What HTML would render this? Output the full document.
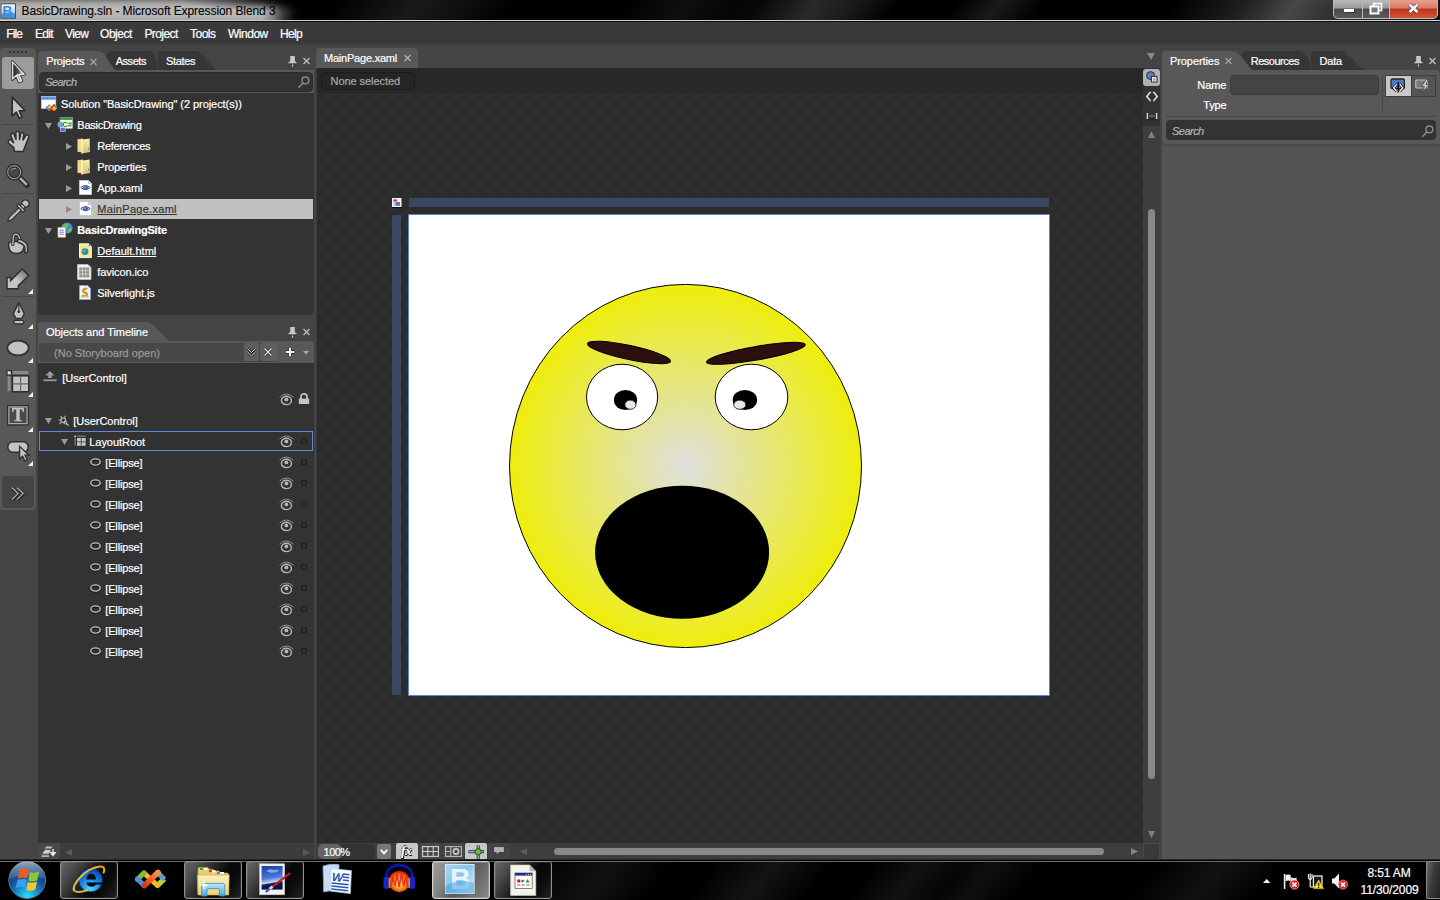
<!DOCTYPE html>
<html><head><meta charset="utf-8"><title>BasicDrawing.sln - Microsoft Expression Blend 3</title>
<style>
*{box-sizing:border-box;margin:0;padding:0}
html,body{width:1440px;height:900px;overflow:hidden;background:#444;font-family:"Liberation Sans",sans-serif;font-size:11px;color:#fff}
.a{position:absolute}
.t{position:absolute;white-space:nowrap;line-height:14px;height:14px;-webkit-text-stroke:0.2px currentColor}
svg{position:absolute;overflow:visible}
</style></head><body>
<!-- title bar -->
<div class="a" style="left:0px;top:0px;width:1440px;height:22px;background:#000;"></div>
<div class="a" style="left:0;top:0;width:1440px;height:20px;overflow:hidden"><div class="a" style="left:-20px;top:0;width:1480px;height:20px;transform:skewX(-35deg);background:linear-gradient(90deg,rgba(255,255,255,0) 0px,rgba(255,255,255,0) 350px,rgba(255,255,255,0.1) 430px,rgba(255,255,255,0.06) 480px,rgba(255,255,255,0) 530px,rgba(255,255,255,0) 640px,rgba(255,255,255,0.06) 700px,rgba(255,255,255,0.02) 750px,rgba(255,255,255,0.03) 775px,rgba(255,255,255,0.16) 830px,rgba(255,255,255,0.1) 870px,rgba(255,255,255,0) 915px,rgba(255,255,255,0) 970px,rgba(255,255,255,0.1) 1015px,rgba(255,255,255,0) 1060px,rgba(255,255,255,0) 1190px,rgba(255,255,255,0.12) 1260px,rgba(255,255,255,0.28) 1310px,rgba(255,255,255,0.2) 1350px,rgba(255,255,255,0.05) 1480px)"></div></div>
<div class="a" style="left:0px;top:0px;width:300px;height:20px;background:linear-gradient(180deg,#787878 0,#8e8e8e 8%,#a6a6a6 20%,#b6b6b6 35%,#bababa 55%,#b4b4b4 80%,#a8a8a8 100%);"></div>
<div class="a" style="left:180px;top:0px;width:122px;height:12px;background:radial-gradient(ellipse 100% 100% at 100% 0,rgba(0,0,0,.95) 0,rgba(0,0,0,.8) 30%,rgba(0,0,0,.35) 65%,rgba(0,0,0,0) 100%);"></div>
<div class="a" style="left:262px;top:0px;width:40px;height:20px;background:linear-gradient(90deg,rgba(0,0,0,0) 0,rgba(0,0,0,.25) 25%,rgba(0,0,0,.7) 55%,rgba(0,0,0,.95) 80%,#000 100%);"></div>
<div class="a" style="left:0px;top:20px;width:1440px;height:1px;background:#d0d0d0;"></div>
<div class="a" style="left:0px;top:21px;width:1440px;height:1px;background:#0c0c0c;"></div>
<span class="t" style="left:21.5px;top:3.84px;font-size:12px;color:#000;letter-spacing:-0.087px;-webkit-text-stroke:0.1px #000;">BasicDrawing.sln - Microsoft Expression Blend 3</span>
<svg style="left:0px;top:3px" width="17" height="16" viewBox="0 3 17 16"><defs><linearGradient id="ai" x1="0" y1="0" x2="0" y2="1"><stop offset="0" stop-color="#f4fbff"/><stop offset="0.6" stop-color="#b8dcf4"/><stop offset="1" stop-color="#6ab4ea"/></linearGradient></defs><rect x="1" y="3.8" width="14.4" height="14.4" fill="url(#ai)" stroke="#3a3a3a" stroke-width="0.9"/><path d="M1.5 14 Q8 11 15 13.4 V17.8 H1.5 Z" fill="#2a84d8" opacity="0.75"/><text x="2.6" y="16.2" font-family="Liberation Sans, sans-serif" font-weight="bold" font-size="14" fill="#3a8cdc" style="will-change:transform">B</text></svg>
<div class="a" style="left:1333px;top:0px;width:105px;height:19px;background:#bbb;border-radius:0 0 5px 5px;"></div>
<div class="a" style="left:1334px;top:0px;width:28px;height:18px;background:linear-gradient(#b9b9b9 0,#999 45%,#4a4a4a 50%,#5a5a5a 100%);border-radius:0 0 0 4px;"></div>
<div class="a" style="left:1363px;top:0px;width:26px;height:18px;background:linear-gradient(#b9b9b9 0,#999 45%,#4a4a4a 50%,#5a5a5a 100%);"></div>
<div class="a" style="left:1390px;top:0px;width:47px;height:18px;background:linear-gradient(#e8a090 0,#d87a68 45%,#c0341a 50%,#d0573a 100%);border-radius:0 0 4px 0;"></div>
<div class="a" style="left:1344px;top:9px;width:10px;height:3px;background:#fff;box-shadow:0 0 1px 0.5px #333;"></div>
<svg style="left:1369px;top:2px" width="14" height="13" viewBox="0 0 14 13"><rect x="4.5" y="1.5" width="8" height="7" fill="none" stroke="#fff" stroke-width="1.6"/><rect x="1.5" y="4.5" width="8" height="7" fill="#777" stroke="#fff" stroke-width="2"/></svg>
<svg style="left:1408px;top:2.5px" width="11" height="11" viewBox="0 0 11 11"><path d="M1.6 1.6 L9.4 9 M9.4 1.6 L1.6 9" stroke="#444" stroke-width="4" stroke-linecap="butt"/><path d="M1.6 1.6 L9.4 9 M9.4 1.6 L1.6 9" stroke="#fff" stroke-width="2.6" stroke-linecap="butt"/></svg>
<div class="a" style="left:0px;top:22px;width:1440px;height:22px;background:#3a3a3a;"></div>
<div class="a" style="left:0px;top:44px;width:1440px;height:1px;background:#404040;"></div>
<span class="t" style="left:6.2px;top:26.84px;font-size:12px;color:#fff;letter-spacing:-0.834px;">File</span>
<span class="t" style="left:35px;top:26.84px;font-size:12px;color:#fff;letter-spacing:-0.669px;">Edit</span>
<span class="t" style="left:65px;top:26.84px;font-size:12px;color:#fff;letter-spacing:-0.648px;">View</span>
<span class="t" style="left:100px;top:26.84px;font-size:12px;color:#fff;letter-spacing:-0.447px;">Object</span>
<span class="t" style="left:144.4px;top:26.84px;font-size:12px;color:#fff;letter-spacing:-0.564px;">Project</span>
<span class="t" style="left:190px;top:26.84px;font-size:12px;color:#fff;letter-spacing:-0.503px;">Tools</span>
<span class="t" style="left:228px;top:26.84px;font-size:12px;color:#fff;letter-spacing:-0.480px;">Window</span>
<span class="t" style="left:280px;top:26.84px;font-size:12px;color:#fff;letter-spacing:-0.670px;">Help</span>
<!-- toolbar -->
<div class="a" style="left:0px;top:48px;width:36px;height:462px;background:#585858;border-radius:3px 4px 4px 3px;"></div>
<div class="a" style="left:9px;top:51px;width:2px;height:2px;background:#343434;"></div>
<div class="a" style="left:13px;top:51px;width:2px;height:2px;background:#343434;"></div>
<div class="a" style="left:17px;top:51px;width:2px;height:2px;background:#343434;"></div>
<div class="a" style="left:21px;top:51px;width:2px;height:2px;background:#343434;"></div>
<div class="a" style="left:25px;top:51px;width:2px;height:2px;background:#343434;"></div>
<div class="a" style="left:2px;top:57px;width:32px;height:32px;background:#9c9c9c;border-radius:3px;"></div>
<svg style="left:11.4px;top:60.4px" width="16" height="24" viewBox="0 0 16 24"><defs><linearGradient id="sa" x1="0" y1="0" x2="1" y2="0"><stop offset="0.1" stop-color="#2c2c2c"/><stop offset="0.55" stop-color="#555"/><stop offset="1" stop-color="#c8c8c8"/></linearGradient></defs><path d="M1.2 1.2 L1.2 19.8 L5.3 16.2 L8.1 22.2 L11.1 20.8 L8.3 14.9 L14 14.5 Z" fill="#f4f4f4" stroke="#2a2a2a" stroke-width="2.2" stroke-linejoin="round"/><path d="M1.2 1.2 L1.2 19.8 L5.3 16.2 L8.1 22.2 L11.1 20.8 L8.3 14.9 L14 14.5 Z" fill="#f4f4f4" stroke="#f4f4f4" stroke-width="0.5"/><path d="M2.3 3.6 L2.3 17.4 L5.4 14.6 L11.6 13.6 Z" fill="url(#sa)"/><path d="M6.4 16 L8.6 20.6 L9.4 20.2 L7.2 15.6 Z" fill="#888"/></svg>
<svg style="left:11.4px;top:95.6px" width="16" height="24" viewBox="0 0 16 24"><path d="M1.2 1.2 L1.2 19.8 L5.3 16.2 L8.1 22.2 L11.1 20.8 L8.3 14.9 L14 14.5 Z" fill="#c2c2c2" stroke="#2e2e2e" stroke-width="1.7" stroke-linejoin="round"/></svg>
<div class="a" style="left:2px;top:124px;width:32px;height:1px;background:#464646;"></div>
<div class="a" style="left:2px;top:193px;width:32px;height:1px;background:#464646;"></div>
<div class="a" style="left:2px;top:296px;width:32px;height:1px;background:#464646;"></div>
<svg style="left:0px;top:126px" width="36" height="30" viewBox="0 0 36 30"><path d="M14.6 25.6 L13.6 21.4 L8.6 17.2 Q7.6 15.2 9.2 13.8 Q10.4 13.2 11.4 14.2 L13.6 16.8 L10.8 9.6 Q10.6 7.4 12.4 7.2 Q13.6 7.2 14.2 8.6 L16 13.6 L15.8 7 Q16 5.2 17.6 5.2 Q19.2 5.2 19.4 7 L19.6 13.4 L20.6 8 Q21 6.2 22.6 6.6 Q24 7 23.8 8.8 L23 14 L25.6 9.8 Q26.6 8.2 28 9 Q29.2 9.8 28.6 11.6 L25.2 20 L23.2 25.6 Z" fill="#c2c2c2" stroke="#2e2e2e" stroke-width="1.5" stroke-linejoin="round"/></svg>
<svg style="left:6.3px;top:164.2px" width="24" height="23" viewBox="0 0 24 23"><path d="M13.5 13.5 L21 21" stroke="#2e2e2e" stroke-width="5.6" stroke-linecap="round"/><path d="M14 14 L20.8 20.8" stroke="#b4b4b4" stroke-width="2.4" stroke-linecap="butt"/><circle cx="8.2" cy="8.2" r="6.6" fill="#474747" stroke="#2e2e2e" stroke-width="3.6"/><circle cx="8.2" cy="8.2" r="6.5" fill="none" stroke="#b0b0b0" stroke-width="1"/><path d="M4.6 6.4 Q6.6 3.8 10 4.4" stroke="#aaa" stroke-width="0.9" fill="none"/></svg>
<svg style="left:-0.8px;top:197px" width="36" height="30" viewBox="0 0 36 30"><g transform="rotate(45 18 15)"><circle cx="18" cy="3.2" r="3.7" fill="#c2c2c2" stroke="#2e2e2e" stroke-width="1.4"/><rect x="15.6" y="5.6" width="4.8" height="3" fill="#c2c2c2" stroke="#2e2e2e" stroke-width="1.1"/><rect x="13.4" y="8.2" width="9.2" height="2.6" fill="#c2c2c2" stroke="#2e2e2e" stroke-width="1.1"/><path d="M16.2 10.8 L19.8 10.8 L19.8 24 L18 28.4 L16.2 24 Z" fill="#c2c2c2" stroke="#2e2e2e" stroke-width="1.2" stroke-linejoin="round"/><path d="M16.6 14 H18.2 M16.6 16.4 H18.2 M16.6 18.8 H18.2 M16.6 21.2 H18.2" stroke="#777" stroke-width="0.7"/></g></svg>
<svg style="left:0px;top:230px" width="36" height="26" viewBox="0 0 36 26"><path d="M8.8 12.4 Q8 16.4 9.6 19.8 Q11 23.4 16.2 23.4 Q21.6 23.4 23 20 Q24.6 16.6 24.2 13.6 Q20 9.4 8.8 12.4 Z" fill="#c2c2c2" stroke="#2e2e2e" stroke-width="1.5" stroke-linejoin="round"/><path d="M18.4 8.6 Q23.4 10.4 26.4 13.2 Q27.8 14.8 27.6 22.4 L25 22.8 Q25.2 16.6 24 15.4 Q21.6 13.4 17.4 12 Z" fill="#c2c2c2" stroke="#2e2e2e" stroke-width="1.4" stroke-linejoin="round"/><path d="M12.8 14.4 L13.3 7.2 Q13.8 4.2 16 4.2 Q18.4 4.4 19.6 8.4" fill="none" stroke="#2e2e2e" stroke-width="3.4" stroke-linecap="round"/><path d="M12.8 14.4 L13.3 7.2 Q13.8 4.2 16 4.2 Q18.4 4.4 19.6 8.4" fill="none" stroke="#c2c2c2" stroke-width="1.3" stroke-linecap="round"/></svg>
<svg style="left:6px;top:268px" width="24" height="22" viewBox="0 0 24 22"><defs><linearGradient id="ga" x1="1" y1="0" x2="0" y2="1"><stop offset="0" stop-color="#5e5e5e"/><stop offset="0.55" stop-color="#c4c4c4"/><stop offset="1" stop-color="#c4c4c4"/></linearGradient></defs><path d="M16.2 1 L22.8 7.6 L12.4 17.6 L12.4 20.8 L1 20.8 L1 9.6 L4.6 9.6 L4.6 12.6 Z" fill="url(#ga)" stroke="#2e2e2e" stroke-width="1.5" stroke-linejoin="miter"/></svg>
<svg style="left:11.6px;top:301.6px" width="13" height="23" viewBox="0 0 13 23"><g transform="scale(1.08 1.02)"><path d="M6.3 0.8 L11.4 11.6 L8.8 16.2 L3.8 16.2 L1.2 11.6 Z" fill="#c2c2c2" stroke="#2e2e2e" stroke-width="1.3" stroke-linejoin="round"/><path d="M6.3 1.4 L6.3 9" stroke="#2e2e2e" stroke-width="1"/><circle cx="6.3" cy="9.6" r="1.3" fill="#2e2e2e"/><rect x="1.6" y="18" width="9.4" height="3.4" rx="1.7" fill="#c2c2c2" stroke="#2e2e2e" stroke-width="1.2"/></g></svg>
<svg style="left:6px;top:339px" width="24" height="18" viewBox="0 0 24 18"><ellipse cx="12" cy="9" rx="10.6" ry="7.4" fill="#c2c2c2" stroke="#2e2e2e" stroke-width="1.6"/></svg>
<svg style="left:6px;top:370px" width="24" height="24" viewBox="0 0 24 24"><rect x="1" y="0.6" width="4.4" height="4.4" fill="#e0e0e0" stroke="#2e2e2e" stroke-width="1.2"/><rect x="6.8" y="1" width="15.6" height="3" fill="#8a8a8a"/><rect x="1.6" y="6.4" width="3" height="14.6" fill="#8a8a8a"/><rect x="6.4" y="5.8" width="16.4" height="16" fill="#c2c2c2" stroke="#2e2e2e" stroke-width="1.6"/><path d="M14.6 6 L14.6 21.6 M6.6 13.8 L22.6 13.8" stroke="#666" stroke-width="1.2"/></svg>
<svg style="left:7px;top:405px" width="22" height="21" viewBox="0 0 22 21"><rect x="0.8" y="0.8" width="20.4" height="19" fill="#4a4a4a" stroke="#2e2e2e" stroke-width="1.6"/><rect x="1.9" y="1.9" width="18.2" height="16.8" fill="none" stroke="#c2c2c2" stroke-width="1"/><text x="11" y="16.4" text-anchor="middle" font-family="Liberation Serif, serif" font-weight="bold" font-size="18" fill="#c2c2c2" stroke="#c2c2c2" stroke-width="0.5" style="will-change:transform">T</text></svg>
<svg style="left:7px;top:441px" width="24" height="21" viewBox="0 0 24 21"><rect x="0.8" y="0.8" width="20.4" height="10.4" rx="5" fill="#c2c2c2" stroke="#2e2e2e" stroke-width="1.5"/><path d="M0 0 L0 12.4 L3 9.8 L5.2 14.6 L7.6 13.4 L5.4 8.8 L9.4 8.8 Z" transform="translate(12.6,5.4)" fill="#c2c2c2" stroke="#2e2e2e" stroke-width="1.3"/></svg>
<svg style="left:28px;top:289px" width="5" height="5" viewBox="0 0 5 5"><path d="M5 0 L5 5 L0 5 Z" fill="#f4f4f4"/></svg>
<svg style="left:28px;top:324px" width="5" height="5" viewBox="0 0 5 5"><path d="M5 0 L5 5 L0 5 Z" fill="#f4f4f4"/></svg>
<svg style="left:28px;top:358px" width="5" height="5" viewBox="0 0 5 5"><path d="M5 0 L5 5 L0 5 Z" fill="#f4f4f4"/></svg>
<svg style="left:28px;top:392px" width="5" height="5" viewBox="0 0 5 5"><path d="M5 0 L5 5 L0 5 Z" fill="#f4f4f4"/></svg>
<svg style="left:28px;top:427px" width="5" height="5" viewBox="0 0 5 5"><path d="M5 0 L5 5 L0 5 Z" fill="#f4f4f4"/></svg>
<svg style="left:28px;top:461px" width="5" height="5" viewBox="0 0 5 5"><path d="M5 0 L5 5 L0 5 Z" fill="#f4f4f4"/></svg>
<div class="a" style="left:2px;top:476px;width:32px;height:32px;background:#444;border-radius:3px;"></div>
<svg style="left:11px;top:485.5px" width="14" height="15" viewBox="0 0 14 15"><path d="M1 1.6 L7 7.6 L1 13.6 M6 1.6 L12 7.6 L6 13.6" fill="none" stroke="#222" stroke-width="2.6" transform="translate(0.3,0.8)"/><path d="M1 1.6 L7 7.6 L1 13.6 M6 1.6 L12 7.6 L6 13.6" fill="none" stroke="#b4b4b8" stroke-width="1.3"/></svg>
<!-- left: projects panel -->
<div class="a" style="left:38px;top:70px;width:276px;height:24px;background:#585858;"></div>
<div class="a" style="left:38px;top:93px;width:276px;height:222px;background:#333;border-radius:0 0 4px 4px;"></div>
<svg style="left:107px;top:51px" width="51" height="19"><path d="M0 19 L0 4 Q0 0 4 0 L40 0 Q44.6 0 46.8 3.4 L50 9 L50 19 Z" fill="#363636"/></svg>
<svg style="left:158px;top:51px" width="62" height="19"><path d="M0 19 L0 4 Q0 0 4 0 L37 0 Q41 0 44 3 L56 17 Q58 19 61 19 Z" fill="#363636"/></svg>
<svg style="left:38px;top:51px" width="82" height="20"><path d="M0 20 L0 4 Q0 0 4 0 L59 0 Q63 0 66 3 L76 18 Q78 20 81 20 Z" fill="#585858"/></svg>
<span class="t" style="left:46.3px;top:54.19px;font-size:11px;color:#fff;letter-spacing:-0.217px;">Projects</span>
<svg style="left:89.5px;top:58.5px" width="7" height="6"><path d="M0.5 0 L6.5 6 M6.5 0 L0.5 6" stroke="#a8a8a8" stroke-width="1.1"/></svg>
<span class="t" style="left:115.7px;top:54.19px;font-size:11px;color:#fff;letter-spacing:-0.452px;">Assets</span>
<span class="t" style="left:166px;top:54.19px;font-size:11px;color:#fff;letter-spacing:-0.331px;">States</span>
<svg style="left:287.5px;top:56px" width="9" height="11"><path d="M2.2 0 L6.8 0 L6.8 5 L8.6 6.6 L8.6 7.4 L0.4 7.4 L0.4 6.6 L2.2 5 Z" fill="#c8c8c8"/><path d="M4.5 7.4 L4.5 10.6" stroke="#c8c8c8" stroke-width="1.2"/><path d="M0.4 8 L8.6 8" stroke="#2a2a2a" stroke-width="0.8"/></svg>
<svg style="left:302.5px;top:58px" width="7" height="6"><path d="M0.5 0 L6.5 6 M6.5 0 L0.5 6" stroke="#c0c0c0" stroke-width="1.3"/></svg>
<div class="a" style="left:39px;top:72px;width:274px;height:20px;background:#333;border-radius:4px;border:1px solid #2c2c2c;"></div>
<span class="t" style="left:45.2px;top:75.19px;font-size:11px;color:#b4b4b4;letter-spacing:-0.592px;font-style:italic;">Search</span>
<svg style="left:298px;top:76px" width="12" height="12"><circle cx="7.4" cy="4.4" r="3.4" fill="none" stroke="#8a8a8a" stroke-width="1.4"/><path d="M5 7 L0.8 11.2" stroke="#8a8a8a" stroke-width="1.6" stroke-linecap="round"/></svg>
<svg style="left:41px;top:96px" width="17" height="16" viewBox="41 96 17 16"><defs><linearGradient id="sb" x1="0" y1="0" x2="0" y2="1"><stop offset="0" stop-color="#86a8ee"/><stop offset="1" stop-color="#4a78d8"/></linearGradient></defs><rect x="41.4" y="96.4" width="14.4" height="12" fill="#fdfdfd" stroke="#d0d4e0" stroke-width="0.6"/><rect x="41.4" y="96.4" width="14.4" height="3.2" fill="url(#sb)"/><g transform="translate(45.6,103.6) scale(0.36)"><path d="M10 5 L23.6 17.6 L30 11" fill="none" stroke="#fbb81a" stroke-width="5.4" stroke-linejoin="round"/><path d="M30.4 11.4 L23.6 4.6 L20 8" fill="none" stroke="#5a9ad8" stroke-width="5.4" stroke-linejoin="round"/><path d="M3.4 11.4 L10 4.8" fill="none" stroke="#7ac043" stroke-width="5.4" stroke-linecap="round"/><path d="M3.4 10.8 L10 17.6" fill="none" stroke="#4a8fe0" stroke-width="5.4" stroke-linecap="round"/><path d="M10.4 17.6 L24 4.4" fill="none" stroke="#e8481a" stroke-width="6" stroke-linecap="round"/></g></svg>
<span class="t" style="left:61px;top:97.19px;font-size:11px;color:#fff;letter-spacing:-0.065px;">Solution "BasicDrawing" (2 project(s))</span>
<svg style="left:45px;top:123px" width="7" height="6"><path d="M0 0 L7 0 L3.5 6 Z" fill="#9a9a9a"/></svg>
<svg style="left:57px;top:117px" width="16" height="15" viewBox="0 0 16 15"><rect x="3" y="0.3" width="12.6" height="11.2" fill="#fff" stroke="#9ab" stroke-width="0.5"/><rect x="3" y="0.3" width="12.6" height="2.6" fill="#3a9a3a"/><circle cx="3.4" cy="7.4" r="3" fill="#7aa6e0"/><rect x="3.6" y="10.4" width="4.6" height="4" fill="#4a78c8" stroke="#dde" stroke-width="0.6"/><text x="5.2" y="9.8" font-family="Liberation Sans, sans-serif" font-weight="bold" font-size="7.6" fill="#0a8a0a">C#</text></svg>
<span class="t" style="left:77.3px;top:118.19px;font-size:11px;color:#fff;letter-spacing:-0.254px;">BasicDrawing</span>
<svg style="left:66px;top:142.5px" width="6" height="7"><path d="M0 0 L6 3.5 L0 7 Z" fill="#9a9a9a"/></svg>
<span class="t" style="left:97.3px;top:139.19px;font-size:11px;color:#fff;letter-spacing:-0.335px;">References</span>
<svg style="left:66px;top:163.5px" width="6" height="7"><path d="M0 0 L6 3.5 L0 7 Z" fill="#9a9a9a"/></svg>
<span class="t" style="left:97.3px;top:160.19px;font-size:11px;color:#fff;letter-spacing:-0.113px;">Properties</span>
<svg style="left:66px;top:184.5px" width="6" height="7"><path d="M0 0 L6 3.5 L0 7 Z" fill="#9a9a9a"/></svg>
<span class="t" style="left:97.3px;top:181.19px;font-size:11px;color:#fff;letter-spacing:-0.107px;">App.xaml</span>
<svg style="left:77px;top:138px" width="14" height="16"><defs><linearGradient id="fg77138" x1="0" y1="0" x2="0" y2="1"><stop offset="0" stop-color="#f8efb8"/><stop offset="1" stop-color="#dcc058"/></linearGradient></defs><path d="M0.5 1.2 L6 0.4 L6 14.6 L0.5 13.8 Z" fill="#ecd98a"/><path d="M4 1.8 L12.6 0.6 L13 14 L4.6 15.4 Z" fill="url(#fg77138)"/><path d="M4 1.8 L5.4 1.6 L6 15.2 L4.6 15.4 Z" fill="#fbf4cc"/><rect x="11.2" y="9.4" width="1.2" height="3" fill="#4aa3e0"/></svg>
<svg style="left:77px;top:159px" width="14" height="16"><defs><linearGradient id="fg77159" x1="0" y1="0" x2="0" y2="1"><stop offset="0" stop-color="#f8efb8"/><stop offset="1" stop-color="#dcc058"/></linearGradient></defs><path d="M0.5 1.2 L6 0.4 L6 14.6 L0.5 13.8 Z" fill="#ecd98a"/><path d="M4 1.8 L12.6 0.6 L13 14 L4.6 15.4 Z" fill="url(#fg77159)"/><path d="M4 1.8 L5.4 1.6 L6 15.2 L4.6 15.4 Z" fill="#fbf4cc"/><rect x="11.2" y="9.4" width="1.2" height="3" fill="#4aa3e0"/></svg>
<svg style="left:79px;top:180px" width="13" height="15"><path d="M0.5 0.5 L9.5 0.5 L12.5 3.5 L12.5 14.5 L0.5 14.5 Z" fill="#fff" stroke="#c8c8c8" stroke-width="1"/><path d="M9.5 0.5 L9.5 3.5 L12.5 3.5" fill="#e4e4e4" stroke="#bbb" stroke-width="0.8"/><path d="M1.8 7.6 Q6.5 3.6 11.2 7.6 Q6.5 11.6 1.8 7.6 Z" fill="#fff" stroke="#223" stroke-width="0.8"/><ellipse cx="6.6" cy="7.7" rx="2.7" ry="2" fill="#2a62d8"/><ellipse cx="6" cy="7.2" rx="1.2" ry="0.8" fill="#6da2f4"/></svg>
<div class="a" style="left:39px;top:199px;width:274px;height:20px;background:#c0c0c0;"></div>
<svg style="left:66px;top:205.5px" width="6" height="7"><path d="M0 0 L6 3.5 L0 7 Z" fill="#8a8a8a"/></svg>
<svg style="left:79px;top:201px" width="13" height="15"><path d="M0.5 0.5 L9.5 0.5 L12.5 3.5 L12.5 14.5 L0.5 14.5 Z" fill="#fff" stroke="#c8c8c8" stroke-width="1"/><path d="M9.5 0.5 L9.5 3.5 L12.5 3.5" fill="#e4e4e4" stroke="#bbb" stroke-width="0.8"/><path d="M1.8 7.6 Q6.5 3.6 11.2 7.6 Q6.5 11.6 1.8 7.6 Z" fill="#fff" stroke="#223" stroke-width="0.8"/><ellipse cx="6.6" cy="7.7" rx="2.7" ry="2" fill="#2a62d8"/><ellipse cx="6" cy="7.2" rx="1.2" ry="0.8" fill="#6da2f4"/></svg>
<span class="t" style="left:97.3px;top:202.19px;font-size:11px;color:#333;letter-spacing:0.284px;text-decoration:underline;">MainPage.xaml</span>
<svg style="left:45px;top:228px" width="7" height="6"><path d="M0 0 L7 0 L3.5 6 Z" fill="#9a9a9a"/></svg>
<svg style="left:57px;top:222px" width="16" height="16" viewBox="0 0 16 16"><circle cx="10" cy="6" r="5.6" fill="#3f8fd8"/><path d="M6.4 3 Q9 0.6 12 2.4 Q11 5 8.4 5.2 Q7.4 7.8 5 7 Q5 4.6 6.4 3 Z" fill="#6abf4a"/><path d="M11.6 6.2 Q14.4 5.6 15.2 7.6 Q14 10.8 11.4 11.2 Q10.4 8.6 11.6 6.2 Z" fill="#6abf4a"/><rect x="1" y="5.6" width="7.4" height="9.6" fill="#f8f8fc" stroke="#d8b85a" stroke-width="0.8"/><path d="M2.6 8.2 H6.8 M2.6 10.2 H6.8 M2.6 12.2 H6.8" stroke="#3a6ad0" stroke-width="0.8"/></svg>
<span class="t" style="left:77.3px;top:223.19px;font-size:11px;color:#fff;letter-spacing:-0.214px;font-weight:bold;">BasicDrawingSite</span>
<svg style="left:79px;top:243px" width="13" height="16" viewBox="0 0 13 16"><path d="M0.5 0.8 L9.5 0.8 L12.4 3.6 L12.4 14.6 L0.5 14.6 Z" fill="#f4e88a" stroke="#fff" stroke-width="0.9"/><path d="M9.5 0.8 L9.5 3.6 L12.4 3.6 Z" fill="#fff"/><circle cx="6" cy="8.6" r="3.4" fill="#2f7fd0"/><path d="M4 7 Q6 5.6 7.6 7.2 Q7 9 5.4 9.2 Q4.6 10.6 3.6 9.8 Z" fill="#5ab83a"/><circle cx="10.4" cy="2.4" r="0.9" fill="#4a78c8"/></svg>
<span class="t" style="left:97.3px;top:244.19px;font-size:11px;color:#fff;letter-spacing:0.026px;text-decoration:underline;">Default.html</span>
<svg style="left:77px;top:264px" width="15" height="16" viewBox="0 0 15 16"><path d="M0.5 0.5 L11 0.5 L14 3.5 L14 15.5 L0.5 15.5 Z" fill="#f4f4f4" stroke="#bbb" stroke-width="0.8"/><rect x="2.2" y="3.4" width="10" height="10" fill="#8e8e8e"/><path d="M5.5 3.4 V13.4 M8.9 3.4 V13.4 M2.2 6.7 H12.2 M2.2 10.1 H12.2" stroke="#d4d4d4" stroke-width="0.9"/></svg>
<span class="t" style="left:97.3px;top:265.19px;font-size:11px;color:#fff;letter-spacing:-0.097px;">favicon.ico</span>
<svg style="left:79px;top:285px" width="12" height="15" viewBox="0 0 12 15"><path d="M0.5 0.5 L8.6 0.5 L11.5 3.4 L11.5 14.5 L0.5 14.5 Z" fill="#f2f2fa" stroke="#8ea0d8" stroke-width="0.9"/><path d="M8.2 4 Q4.4 3 4.2 5.6 Q4.4 7.4 7 8 Q9 8.8 7.6 10.4 Q5.6 11.6 3 10.4" fill="none" stroke="#c8962a" stroke-width="2.2"/><path d="M2.2 11.6 L9.6 11.6" stroke="#e0b84a" stroke-width="1.6"/></svg>
<span class="t" style="left:97.3px;top:286.19px;font-size:11px;color:#fff;letter-spacing:-0.092px;">Silverlight.js</span>
<!-- left: objects and timeline -->
<svg style="left:38px;top:322px" width="136" height="20"><path d="M0 20 L0 4 Q0 0 4 0 L108 0 Q112 0 115 3 L130 18 Q132 20 135 20 Z" fill="#585858"/></svg>
<div class="a" style="left:38px;top:341px;width:276px;height:22px;background:#585858;border-radius:0 4px 0 0;"></div>
<div class="a" style="left:38px;top:363px;width:276px;height:480px;background:#333;"></div>
<span class="t" style="left:46px;top:325.19px;font-size:11px;color:#fff;letter-spacing:-0.036px;">Objects and Timeline</span>
<svg style="left:287.5px;top:327px" width="9" height="11"><path d="M2.2 0 L6.8 0 L6.8 5 L8.6 6.6 L8.6 7.4 L0.4 7.4 L0.4 6.6 L2.2 5 Z" fill="#c8c8c8"/><path d="M4.5 7.4 L4.5 10.6" stroke="#c8c8c8" stroke-width="1.2"/><path d="M0.4 8 L8.6 8" stroke="#2a2a2a" stroke-width="0.8"/></svg>
<svg style="left:302.5px;top:329px" width="7" height="6"><path d="M0.5 0 L6.5 6 M6.5 0 L0.5 6" stroke="#c0c0c0" stroke-width="1.3"/></svg>
<div class="a" style="left:39px;top:342.5px;width:238px;height:19px;background:#484848;border-radius:4px;"></div>
<span class="t" style="left:54px;top:346.19px;font-size:11px;color:#9c9c9c;letter-spacing:0.011px;">(No Storyboard open)</span>
<div class="a" style="left:244px;top:343px;width:15px;height:18px;background:#5e5e5e;border-radius:3px;"></div>
<div class="a" style="left:260px;top:343px;width:16.5px;height:18px;background:#5e5e5e;border-radius:3px;"></div>
<svg style="left:247px;top:348px" width="9" height="9" viewBox="0 0 9 9"><path d="M0.5 0.6 L4.5 4.4 L8.5 0.6 M0.5 4 L4.5 7.8 L8.5 4" fill="none" stroke="#222" stroke-width="2.2"/><path d="M0.5 0.6 L4.5 4.4 L8.5 0.6 M0.5 4 L4.5 7.8 L8.5 4" fill="none" stroke="#e0e0e0" stroke-width="1"/></svg>
<svg style="left:264px;top:348px" width="8" height="8" viewBox="0 0 8 8"><path d="M0.5 0.5 L7.5 7.5 M7.5 0.5 L0.5 7.5" stroke="#2a2a2a" stroke-width="2.6"/><path d="M0.5 0.5 L7.5 7.5 M7.5 0.5 L0.5 7.5" stroke="#e4e4e4" stroke-width="1.3"/></svg>
<svg style="left:285px;top:347px" width="10" height="10" viewBox="0 0 10 10"><path d="M5 0.4 V9.6 M0.4 5 H9.6" stroke="#2a2a2a" stroke-width="3.6"/><path d="M5 0.8 V9.2 M0.8 5 H9.2" stroke="#f0f0f0" stroke-width="2.2"/></svg>
<svg style="left:302.5px;top:351px" width="6" height="4" viewBox="0 0 6 4"><path d="M0 0 L6 0 L3 3.4 Z" fill="#aaa"/></svg>
<svg style="left:43px;top:371px" width="14" height="11" viewBox="0 0 14 11"><path d="M7 0 L11.6 4.6 L8.8 4.6 L8.8 7 L5.2 7 L5.2 4.6 L2.4 4.6 Z" fill="#9a9a9a"/><rect x="0.4" y="8.4" width="13.2" height="1.8" fill="#9a9a9a"/></svg>
<span class="t" style="left:62.3px;top:371.19px;font-size:11px;color:#fff;letter-spacing:-0.031px;">[UserControl]</span>
<svg style="left:278.5px;top:392.5px" width="15" height="13" viewBox="0 0 15 13"><path d="M0.6 4.2 Q7 -2.2 14.4 4.2" fill="none" stroke="#8e8e8e" stroke-width="1"/><ellipse cx="7.4" cy="7.4" rx="5" ry="4.2" fill="none" stroke="#b6b6b6" stroke-width="1.4"/><circle cx="7.4" cy="6.4" r="1.9" fill="#b6b6b6"/></svg>
<svg style="left:298px;top:393px" width="12" height="12" viewBox="0 0 12 12"><path d="M3 6 V3.6 Q3 0.8 6 0.8 Q9 0.8 9 3.6 V6" fill="none" stroke="#c4c4c4" stroke-width="1.7"/><rect x="0.8" y="5.6" width="10.4" height="5.6" fill="#c4c4c4"/><rect x="0.2" y="11.2" width="11.6" height="0.8" fill="#222"/></svg>
<svg style="left:45px;top:418px" width="7" height="6"><path d="M0 0 L7 0 L3.5 6 Z" fill="#9a9a9a"/></svg>
<svg style="left:58px;top:415px" width="11" height="11" viewBox="0 0 11 11"><path d="M2.6 1 L4 3 M7.4 0.6 L6.6 2.8 M0.6 5 L3 5.2 M1.4 9 L3.4 7.4" stroke="#b0b0b0" stroke-width="1.2"/><circle cx="5.2" cy="5.2" r="2.3" fill="none" stroke="#b0b0b0" stroke-width="1.3"/><circle cx="7.4" cy="7.6" r="1.4" fill="none" stroke="#d0d0d0" stroke-width="1"/><path d="M8.4 8.6 L10.6 10.6" stroke="#d0d0d0" stroke-width="1.2"/></svg>
<span class="t" style="left:73.3px;top:414.19px;font-size:11px;color:#fff;letter-spacing:-0.031px;">[UserControl]</span>
<div class="a" style="left:39px;top:431px;width:274px;height:20px;background:#323232;border:1px solid #5b8ad8;"></div>
<svg style="left:61px;top:439px" width="7" height="6"><path d="M0 0 L7 0 L3.5 6 Z" fill="#9a9a9a"/></svg>
<svg style="left:73.5px;top:435px" width="12" height="11" viewBox="0 0 12 11"><rect x="0.3" y="0.6" width="1.6" height="1.6" fill="#d8d8d8"/><rect x="3" y="0.4" width="8.4" height="1.4" fill="#7a7a7a"/><rect x="0.4" y="3.2" width="1.4" height="7.4" fill="#7a7a7a"/><rect x="3" y="3" width="8.6" height="7.8" fill="#c8c8c8"/><path d="M7.3 3 V10.8 M3 6.9 H11.6" stroke="#444" stroke-width="0.9"/></svg>
<span class="t" style="left:89.3px;top:435.19px;font-size:11px;color:#fff;letter-spacing:-0.056px;">LayoutRoot</span>
<svg style="left:278.5px;top:434.5px" width="15" height="13" viewBox="0 0 15 13"><path d="M0.6 4.2 Q7 -2.2 14.4 4.2" fill="none" stroke="#8e8e8e" stroke-width="1"/><ellipse cx="7.4" cy="7.4" rx="5" ry="4.2" fill="none" stroke="#b6b6b6" stroke-width="1.4"/><circle cx="7.4" cy="6.4" r="1.9" fill="#b6b6b6"/></svg>
<svg style="left:301px;top:438px" width="6" height="6" viewBox="0 0 6 6"><rect x="0.7" y="0.7" width="4.6" height="4.6" rx="1.4" fill="none" stroke="#1e1e1e" stroke-width="1.2"/></svg>
<svg style="left:90px;top:457.5px" width="11" height="8" viewBox="0 0 11 8"><ellipse cx="5.5" cy="4" rx="4.7" ry="3.1" fill="none" stroke="#1c1c1c" stroke-width="2.4" transform="translate(0,0.6)"/><ellipse cx="5.5" cy="4" rx="4.7" ry="3.1" fill="none" stroke="#c6c6c6" stroke-width="1.4"/></svg>
<span class="t" style="left:105.3px;top:456.19px;font-size:11px;color:#fff;letter-spacing:-0.168px;">[Ellipse]</span>
<svg style="left:278.5px;top:455.5px" width="15" height="13" viewBox="0 0 15 13"><path d="M0.6 4.2 Q7 -2.2 14.4 4.2" fill="none" stroke="#8e8e8e" stroke-width="1"/><ellipse cx="7.4" cy="7.4" rx="5" ry="4.2" fill="none" stroke="#b6b6b6" stroke-width="1.4"/><circle cx="7.4" cy="6.4" r="1.9" fill="#b6b6b6"/></svg>
<svg style="left:301px;top:459px" width="6" height="6" viewBox="0 0 6 6"><rect x="0.7" y="0.7" width="4.6" height="4.6" rx="1.4" fill="none" stroke="#1e1e1e" stroke-width="1.2"/></svg>
<svg style="left:90px;top:478.5px" width="11" height="8" viewBox="0 0 11 8"><ellipse cx="5.5" cy="4" rx="4.7" ry="3.1" fill="none" stroke="#1c1c1c" stroke-width="2.4" transform="translate(0,0.6)"/><ellipse cx="5.5" cy="4" rx="4.7" ry="3.1" fill="none" stroke="#c6c6c6" stroke-width="1.4"/></svg>
<span class="t" style="left:105.3px;top:477.19px;font-size:11px;color:#fff;letter-spacing:-0.168px;">[Ellipse]</span>
<svg style="left:278.5px;top:476.5px" width="15" height="13" viewBox="0 0 15 13"><path d="M0.6 4.2 Q7 -2.2 14.4 4.2" fill="none" stroke="#8e8e8e" stroke-width="1"/><ellipse cx="7.4" cy="7.4" rx="5" ry="4.2" fill="none" stroke="#b6b6b6" stroke-width="1.4"/><circle cx="7.4" cy="6.4" r="1.9" fill="#b6b6b6"/></svg>
<svg style="left:301px;top:480px" width="6" height="6" viewBox="0 0 6 6"><rect x="0.7" y="0.7" width="4.6" height="4.6" rx="1.4" fill="none" stroke="#1e1e1e" stroke-width="1.2"/></svg>
<svg style="left:90px;top:499.5px" width="11" height="8" viewBox="0 0 11 8"><ellipse cx="5.5" cy="4" rx="4.7" ry="3.1" fill="none" stroke="#1c1c1c" stroke-width="2.4" transform="translate(0,0.6)"/><ellipse cx="5.5" cy="4" rx="4.7" ry="3.1" fill="none" stroke="#c6c6c6" stroke-width="1.4"/></svg>
<span class="t" style="left:105.3px;top:498.19px;font-size:11px;color:#fff;letter-spacing:-0.168px;">[Ellipse]</span>
<svg style="left:278.5px;top:497.5px" width="15" height="13" viewBox="0 0 15 13"><path d="M0.6 4.2 Q7 -2.2 14.4 4.2" fill="none" stroke="#8e8e8e" stroke-width="1"/><ellipse cx="7.4" cy="7.4" rx="5" ry="4.2" fill="none" stroke="#b6b6b6" stroke-width="1.4"/><circle cx="7.4" cy="6.4" r="1.9" fill="#b6b6b6"/></svg>
<svg style="left:301px;top:501px" width="6" height="6" viewBox="0 0 6 6"><rect x="0.7" y="0.7" width="4.6" height="4.6" rx="1.4" fill="none" stroke="#1e1e1e" stroke-width="1.2"/></svg>
<svg style="left:90px;top:520.5px" width="11" height="8" viewBox="0 0 11 8"><ellipse cx="5.5" cy="4" rx="4.7" ry="3.1" fill="none" stroke="#1c1c1c" stroke-width="2.4" transform="translate(0,0.6)"/><ellipse cx="5.5" cy="4" rx="4.7" ry="3.1" fill="none" stroke="#c6c6c6" stroke-width="1.4"/></svg>
<span class="t" style="left:105.3px;top:519.19px;font-size:11px;color:#fff;letter-spacing:-0.168px;">[Ellipse]</span>
<svg style="left:278.5px;top:518.5px" width="15" height="13" viewBox="0 0 15 13"><path d="M0.6 4.2 Q7 -2.2 14.4 4.2" fill="none" stroke="#8e8e8e" stroke-width="1"/><ellipse cx="7.4" cy="7.4" rx="5" ry="4.2" fill="none" stroke="#b6b6b6" stroke-width="1.4"/><circle cx="7.4" cy="6.4" r="1.9" fill="#b6b6b6"/></svg>
<svg style="left:301px;top:522px" width="6" height="6" viewBox="0 0 6 6"><rect x="0.7" y="0.7" width="4.6" height="4.6" rx="1.4" fill="none" stroke="#1e1e1e" stroke-width="1.2"/></svg>
<svg style="left:90px;top:541.5px" width="11" height="8" viewBox="0 0 11 8"><ellipse cx="5.5" cy="4" rx="4.7" ry="3.1" fill="none" stroke="#1c1c1c" stroke-width="2.4" transform="translate(0,0.6)"/><ellipse cx="5.5" cy="4" rx="4.7" ry="3.1" fill="none" stroke="#c6c6c6" stroke-width="1.4"/></svg>
<span class="t" style="left:105.3px;top:540.19px;font-size:11px;color:#fff;letter-spacing:-0.168px;">[Ellipse]</span>
<svg style="left:278.5px;top:539.5px" width="15" height="13" viewBox="0 0 15 13"><path d="M0.6 4.2 Q7 -2.2 14.4 4.2" fill="none" stroke="#8e8e8e" stroke-width="1"/><ellipse cx="7.4" cy="7.4" rx="5" ry="4.2" fill="none" stroke="#b6b6b6" stroke-width="1.4"/><circle cx="7.4" cy="6.4" r="1.9" fill="#b6b6b6"/></svg>
<svg style="left:301px;top:543px" width="6" height="6" viewBox="0 0 6 6"><rect x="0.7" y="0.7" width="4.6" height="4.6" rx="1.4" fill="none" stroke="#1e1e1e" stroke-width="1.2"/></svg>
<svg style="left:90px;top:562.5px" width="11" height="8" viewBox="0 0 11 8"><ellipse cx="5.5" cy="4" rx="4.7" ry="3.1" fill="none" stroke="#1c1c1c" stroke-width="2.4" transform="translate(0,0.6)"/><ellipse cx="5.5" cy="4" rx="4.7" ry="3.1" fill="none" stroke="#c6c6c6" stroke-width="1.4"/></svg>
<span class="t" style="left:105.3px;top:561.19px;font-size:11px;color:#fff;letter-spacing:-0.168px;">[Ellipse]</span>
<svg style="left:278.5px;top:560.5px" width="15" height="13" viewBox="0 0 15 13"><path d="M0.6 4.2 Q7 -2.2 14.4 4.2" fill="none" stroke="#8e8e8e" stroke-width="1"/><ellipse cx="7.4" cy="7.4" rx="5" ry="4.2" fill="none" stroke="#b6b6b6" stroke-width="1.4"/><circle cx="7.4" cy="6.4" r="1.9" fill="#b6b6b6"/></svg>
<svg style="left:301px;top:564px" width="6" height="6" viewBox="0 0 6 6"><rect x="0.7" y="0.7" width="4.6" height="4.6" rx="1.4" fill="none" stroke="#1e1e1e" stroke-width="1.2"/></svg>
<svg style="left:90px;top:583.5px" width="11" height="8" viewBox="0 0 11 8"><ellipse cx="5.5" cy="4" rx="4.7" ry="3.1" fill="none" stroke="#1c1c1c" stroke-width="2.4" transform="translate(0,0.6)"/><ellipse cx="5.5" cy="4" rx="4.7" ry="3.1" fill="none" stroke="#c6c6c6" stroke-width="1.4"/></svg>
<span class="t" style="left:105.3px;top:582.19px;font-size:11px;color:#fff;letter-spacing:-0.168px;">[Ellipse]</span>
<svg style="left:278.5px;top:581.5px" width="15" height="13" viewBox="0 0 15 13"><path d="M0.6 4.2 Q7 -2.2 14.4 4.2" fill="none" stroke="#8e8e8e" stroke-width="1"/><ellipse cx="7.4" cy="7.4" rx="5" ry="4.2" fill="none" stroke="#b6b6b6" stroke-width="1.4"/><circle cx="7.4" cy="6.4" r="1.9" fill="#b6b6b6"/></svg>
<svg style="left:301px;top:585px" width="6" height="6" viewBox="0 0 6 6"><rect x="0.7" y="0.7" width="4.6" height="4.6" rx="1.4" fill="none" stroke="#1e1e1e" stroke-width="1.2"/></svg>
<svg style="left:90px;top:604.5px" width="11" height="8" viewBox="0 0 11 8"><ellipse cx="5.5" cy="4" rx="4.7" ry="3.1" fill="none" stroke="#1c1c1c" stroke-width="2.4" transform="translate(0,0.6)"/><ellipse cx="5.5" cy="4" rx="4.7" ry="3.1" fill="none" stroke="#c6c6c6" stroke-width="1.4"/></svg>
<span class="t" style="left:105.3px;top:603.19px;font-size:11px;color:#fff;letter-spacing:-0.168px;">[Ellipse]</span>
<svg style="left:278.5px;top:602.5px" width="15" height="13" viewBox="0 0 15 13"><path d="M0.6 4.2 Q7 -2.2 14.4 4.2" fill="none" stroke="#8e8e8e" stroke-width="1"/><ellipse cx="7.4" cy="7.4" rx="5" ry="4.2" fill="none" stroke="#b6b6b6" stroke-width="1.4"/><circle cx="7.4" cy="6.4" r="1.9" fill="#b6b6b6"/></svg>
<svg style="left:301px;top:606px" width="6" height="6" viewBox="0 0 6 6"><rect x="0.7" y="0.7" width="4.6" height="4.6" rx="1.4" fill="none" stroke="#1e1e1e" stroke-width="1.2"/></svg>
<svg style="left:90px;top:625.5px" width="11" height="8" viewBox="0 0 11 8"><ellipse cx="5.5" cy="4" rx="4.7" ry="3.1" fill="none" stroke="#1c1c1c" stroke-width="2.4" transform="translate(0,0.6)"/><ellipse cx="5.5" cy="4" rx="4.7" ry="3.1" fill="none" stroke="#c6c6c6" stroke-width="1.4"/></svg>
<span class="t" style="left:105.3px;top:624.19px;font-size:11px;color:#fff;letter-spacing:-0.168px;">[Ellipse]</span>
<svg style="left:278.5px;top:623.5px" width="15" height="13" viewBox="0 0 15 13"><path d="M0.6 4.2 Q7 -2.2 14.4 4.2" fill="none" stroke="#8e8e8e" stroke-width="1"/><ellipse cx="7.4" cy="7.4" rx="5" ry="4.2" fill="none" stroke="#b6b6b6" stroke-width="1.4"/><circle cx="7.4" cy="6.4" r="1.9" fill="#b6b6b6"/></svg>
<svg style="left:301px;top:627px" width="6" height="6" viewBox="0 0 6 6"><rect x="0.7" y="0.7" width="4.6" height="4.6" rx="1.4" fill="none" stroke="#1e1e1e" stroke-width="1.2"/></svg>
<svg style="left:90px;top:646.5px" width="11" height="8" viewBox="0 0 11 8"><ellipse cx="5.5" cy="4" rx="4.7" ry="3.1" fill="none" stroke="#1c1c1c" stroke-width="2.4" transform="translate(0,0.6)"/><ellipse cx="5.5" cy="4" rx="4.7" ry="3.1" fill="none" stroke="#c6c6c6" stroke-width="1.4"/></svg>
<span class="t" style="left:105.3px;top:645.19px;font-size:11px;color:#fff;letter-spacing:-0.168px;">[Ellipse]</span>
<svg style="left:278.5px;top:644.5px" width="15" height="13" viewBox="0 0 15 13"><path d="M0.6 4.2 Q7 -2.2 14.4 4.2" fill="none" stroke="#8e8e8e" stroke-width="1"/><ellipse cx="7.4" cy="7.4" rx="5" ry="4.2" fill="none" stroke="#b6b6b6" stroke-width="1.4"/><circle cx="7.4" cy="6.4" r="1.9" fill="#b6b6b6"/></svg>
<svg style="left:301px;top:648px" width="6" height="6" viewBox="0 0 6 6"><rect x="0.7" y="0.7" width="4.6" height="4.6" rx="1.4" fill="none" stroke="#1e1e1e" stroke-width="1.2"/></svg>
<div class="a" style="left:38px;top:843px;width:276px;height:17px;background:#3c3c3c;"></div>
<div class="a" style="left:38px;top:843px;width:22px;height:17px;background:#484848;"></div>
<svg style="left:41px;top:846px" width="16" height="11" viewBox="0 0 16 11"><path d="M0.6 8 L4 3.6 L10.6 3.6 L8 8 Z" fill="#d4d4d4" stroke="#2a2a2a" stroke-width="0.6"/><path d="M0.6 9.2 H8 M0.6 10.4 H8" stroke="#c8c8c8" stroke-width="0.9"/><path d="M3.6 2.6 L5.4 0.6 L11.4 0.6 L10 2.6 Z" fill="#bdbdbd"/><path d="M12 3 V8 M9.8 6.6 L12 9.6 L14.2 6.6 Z" stroke="#e8e8e8" stroke-width="1.4" fill="#e8e8e8"/></svg>
<svg style="left:65px;top:848.5px" width="7" height="7" viewBox="0 0 7 7"><path d="M7 0 L7 7 L0 3.5 Z" fill="#5a5a5a"/></svg>
<svg style="left:303px;top:848.5px" width="7" height="7" viewBox="0 0 7 7"><path d="M0 0 L0 7 L7 3.5 Z" fill="#5a5a5a"/></svg>
<!-- center: document -->
<div class="a" style="left:316px;top:48px;width:102px;height:20px;background:#585858;border-radius:4px 4px 0 0;"></div>
<span class="t" style="left:324px;top:51.19px;font-size:11px;color:#fff;letter-spacing:-0.216px;">MainPage.xaml</span>
<svg style="left:403.5px;top:54.5px" width="7" height="6" viewBox="0 0 7 6"><path d="M0.5 0 L6.5 6 M6.5 0 L0.5 6" stroke="#b8b8b8" stroke-width="1.1"/></svg>
<div class="a" style="left:316px;top:68px;width:827px;height:25px;background:#282828;"></div>
<div class="a" style="left:321px;top:72px;width:94px;height:18px;background:#252525;border:1px solid #1c1c1c;border-radius:3px;"></div>
<span class="t" style="left:330.5px;top:74.19px;font-size:11px;color:#a8a8a8;letter-spacing:-0.063px;">None selected</span>
<div class="a" style="left:316px;top:93px;width:827px;height:750px;background-color:#2b2b2b;background-image:conic-gradient(#2e2e2e 25%,#2b2b2b 0 50%,#2e2e2e 0 75%,#2b2b2b 0);background-size:16px 16px;background-position:1px 0px;"></div>
<div class="a" style="left:316px;top:68px;width:1px;height:775px;background:#3a3a3a;"></div>
<div class="a" style="left:409px;top:198px;width:640px;height:9px;background:#3b4762;"></div>
<div class="a" style="left:392px;top:215px;width:9px;height:480px;background:#3b4762;"></div>
<svg style="left:392px;top:198px" width="10" height="10" viewBox="0 0 10 10"><rect x="0" y="0" width="9.5" height="9" fill="#f4f4f4"/><rect x="0" y="9" width="10" height="1" fill="#111"/><rect x="1.4" y="1.4" width="3.6" height="2.2" fill="#c8353a"/><rect x="3.4" y="4" width="4.6" height="3.8" fill="#5878c0"/><rect x="1.4" y="3.8" width="1.6" height="4" fill="#c8c8c8"/></svg>
<div class="a" style="left:408px;top:214px;width:642px;height:482px;background:#fff;border:1px solid #5585e4;"></div>
<svg style="left:409px;top:215px" width="640" height="480" viewBox="409 215 640 480">
<defs><radialGradient id="fg" cx="0.5" cy="0.5" r="0.5"><stop offset="0" stop-color="#dfdfdf"/><stop offset="1" stop-color="#eeee0c"/></radialGradient></defs>
<ellipse cx="685.5" cy="466" rx="176" ry="181.6" fill="url(#fg)" stroke="#000" stroke-width="1"/>
<ellipse cx="629" cy="352.4" rx="42.5" ry="7" transform="rotate(12.1 629 352.4)" fill="#2d0f10" stroke="#000" stroke-width="1"/>
<ellipse cx="755.9" cy="353.35" rx="50.15" ry="6.8" transform="rotate(-10 755.9 353.35)" fill="#2d0f10" stroke="#000" stroke-width="1"/>
<ellipse cx="622.1" cy="397" rx="35.6" ry="32.8" fill="#fff" stroke="#000" stroke-width="1"/>
<ellipse cx="751.5" cy="397" rx="36.3" ry="32.8" fill="#fff" stroke="#000" stroke-width="1"/>
<ellipse cx="625.5" cy="400" rx="11.6" ry="10.1" fill="#000"/>
<ellipse cx="630.4" cy="404.7" rx="5.6" ry="4.6" fill="#e6e6e6" stroke="#000" stroke-width="0.8"/>
<ellipse cx="744.9" cy="400" rx="12.2" ry="10.1" fill="#000"/>
<ellipse cx="739.8" cy="404.7" rx="6.1" ry="4.6" fill="#e6e6e6" stroke="#000" stroke-width="0.8"/>
<ellipse cx="682.1" cy="552.2" rx="87" ry="66.5" fill="#000"/>
</svg>
<div class="a" style="left:1143px;top:68px;width:17px;height:58px;background:#333;"></div>
<div class="a" style="left:1143px;top:126px;width:17px;height:717px;background:#3e3e3e;"></div>
<svg style="left:1147px;top:53px" width="8" height="7" viewBox="0 0 8 7"><path d="M0 0 L8 0 L4 7 Z" fill="#8a8a8a"/></svg>
<div class="a" style="left:1143px;top:69px;width:17px;height:17px;background:#b2b2b2;border-radius:3px;"></div>
<svg style="left:1146px;top:71px" width="12" height="12" viewBox="0 0 12 12"><circle cx="4.6" cy="4.6" r="4" fill="#5a7cc4" stroke="#222" stroke-width="0.9"/><rect x="5.4" y="5.4" width="5.6" height="5.6" fill="#eee" stroke="#222" stroke-width="0.9"/><rect x="7" y="7" width="2.6" height="2.6" fill="#aaa"/></svg>
<svg style="left:1145.5px;top:91px" width="12" height="11" viewBox="0 0 12 11"><path d="M4.6 0.8 L0.8 5.4 L4.6 10 M7.4 0.8 L11.2 5.4 L7.4 10" fill="none" stroke="#e4e4e4" stroke-width="1.5"/></svg>
<svg style="left:1145.5px;top:112.5px" width="12" height="7" viewBox="0 0 12 7"><path d="M1.4 0 V6 M10.6 0 V6" stroke="#e0e0e0" stroke-width="1.2"/><path d="M0.6 0.4 H2.2 M0.6 5.6 H2.2 M9.8 0.4 H11.4 M9.8 5.6 H11.4" stroke="#e0e0e0" stroke-width="0.8"/><path d="M3.5 3 H4.5 M5.5 3 H6.5 M7.5 3 H8.5" stroke="#e0e0e0" stroke-width="1"/><path d="M0 6.8 H12" stroke="#1a1a1a" stroke-width="0.8"/></svg>
<svg style="left:1148px;top:131px" width="7" height="7" viewBox="0 0 7 7"><path d="M0 7 L7 7 L3.5 0 Z" fill="#808080"/></svg>
<div class="a" style="left:1148px;top:208.5px;width:7px;height:570px;background:#888;border-radius:3.5px;"></div>
<svg style="left:1148px;top:831px" width="7" height="7" viewBox="0 0 7 7"><path d="M0 0 L7 0 L3.5 7 Z" fill="#808080"/></svg>
<div class="a" style="left:316px;top:843px;width:827px;height:17px;background:#3e3e3e;"></div>
<div class="a" style="left:1143px;top:843px;width:17px;height:17px;background:#3a3a3a;border:1px solid #484848;"></div>
<div class="a" style="left:318px;top:844px;width:57px;height:15px;background:#333;border-radius:4px;"></div>
<div class="a" style="left:318px;top:844px;width:25px;height:15px;background:#646464;border-radius:5px 7px 7px 5px;"></div>
<span class="t" style="left:323.6px;top:845.19px;font-size:11px;color:#fff;letter-spacing:-0.533px;">100%</span>
<div class="a" style="left:377px;top:844px;width:14px;height:15px;background:#777;border-radius:2px;"></div>
<svg style="left:380px;top:848.5px" width="8" height="6" viewBox="0 0 8 6"><path d="M0.8 0.8 L4 4.4 L7.2 0.8" fill="none" stroke="#fff" stroke-width="1.7"/></svg>
<div class="a" style="left:396px;top:843px;width:22px;height:17px;background:#c8c8c8;border-radius:2px;"></div>
<span class="t" style="left:401px;top:844px;font-family:'Liberation Serif',serif;font-style:italic;font-weight:bold;font-size:13.5px;color:#fafafa;letter-spacing:-0.3px;will-change:transform;text-shadow:0.9px 0.9px 0.4px #111,-0.6px 0 0 #333,0 -0.6px 0 #333,0.6px 0 0 #333,0 0.6px 0 #333;">fx</span>
<div class="a" style="left:419.5px;top:843px;width:21.5px;height:17px;background:#484848;border-radius:2px;"></div>
<svg style="left:422px;top:846px" width="17" height="11" viewBox="0 0 17 11"><rect x="0.6" y="0.6" width="15.8" height="9.8" fill="none" stroke="#d0d0d0" stroke-width="1.1"/><path d="M5.8 0.6 V10.4 M11.2 0.6 V10.4 M0.6 5.5 H16.4" stroke="#d0d0d0" stroke-width="1.1"/></svg>
<div class="a" style="left:442.5px;top:843px;width:21.5px;height:17px;background:#484848;border-radius:2px;"></div>
<svg style="left:445px;top:846px" width="17" height="11" viewBox="0 0 17 11"><rect x="0.6" y="0.6" width="15.8" height="9.8" fill="none" stroke="#b8b8b8" stroke-width="1.1"/><path d="M5.8 0.6 V10.4 M0.6 5.5 H5.8" stroke="#b8b8b8" stroke-width="1.1"/><circle cx="11" cy="5.5" r="2.6" fill="none" stroke="#c8c8c8" stroke-width="1.6"/></svg>
<div class="a" style="left:465px;top:843px;width:22px;height:17px;background:#c8c8c8;border-radius:2px;"></div>
<svg style="left:468px;top:845px" width="17" height="14" viewBox="0 0 17 14"><path d="M0.5 6.8 H16 M10.2 0.4 V13.6" stroke="#1c2438" stroke-width="3"/><path d="M1 6.8 H15.5 M10.2 0.9 V13.1" stroke="#8aa8e4" stroke-width="1.5"/><circle cx="10.2" cy="6.8" r="3.1" fill="#68c02a" stroke="#1c3a10" stroke-width="0.8"/></svg>
<div class="a" style="left:488px;top:843px;width:22px;height:17px;background:#444;border-radius:2px;"></div>
<svg style="left:493px;top:846px" width="12" height="11" viewBox="0 0 12 11"><path d="M0.6 0.6 H11.4 V6.6 H6 L3 10 L3.4 6.6 H0.6 Z" fill="#b2b2b2" stroke="#2a2a2a" stroke-width="0.8"/></svg>
<svg style="left:519.5px;top:848px" width="7" height="7" viewBox="0 0 7 7"><path d="M7 0 L7 7 L0 3.5 Z" fill="#5c5c5c"/></svg>
<div class="a" style="left:554px;top:848px;width:550px;height:7px;background:#888;border-radius:3.5px;"></div>
<svg style="left:1131px;top:848px" width="7" height="7" viewBox="0 0 7 7"><path d="M0 0 L0 7 L7 3.5 Z" fill="#808080"/></svg>
<!-- right: properties panel -->
<div class="a" style="left:1162px;top:70px;width:278px;height:74px;background:#585858;border-radius:0 4px 0 4px;"></div>
<div class="a" style="left:1162px;top:144px;width:278px;height:2px;background:#4a4a4a;"></div>
<div class="a" style="left:1162px;top:146px;width:278px;height:714px;background:#545454;"></div>
<svg style="left:1242px;top:51px" width="68" height="19"><path d="M0 19 L0 4 Q0 0 4 0 L56 0 Q61 0 63.4 3.4 L68 10.5 L68 19 Z" fill="#363636"/></svg>
<svg style="left:1311px;top:51px" width="56" height="19"><path d="M0 19 L0 4 Q0 0 4 0 L29 0 Q33 0 36 3 L50 17 Q52 19 55 19 Z" fill="#363636"/></svg>
<svg style="left:1162px;top:51px" width="95" height="20"><path d="M0 20 L0 4 Q0 0 4 0 L70 0 Q74 0 77 3 L89 18 Q91 20 94 20 Z" fill="#585858"/></svg>
<span class="t" style="left:1170px;top:54.19px;font-size:11px;color:#fff;letter-spacing:-0.083px;">Properties</span>
<svg style="left:1225px;top:58.3px" width="7" height="6"><path d="M0.5 0 L6.5 6 M6.5 0 L0.5 6" stroke="#a8a8a8" stroke-width="1.1"/></svg>
<span class="t" style="left:1250.7px;top:54.19px;font-size:11px;color:#fff;letter-spacing:-0.475px;">Resources</span>
<span class="t" style="left:1319.6px;top:54.19px;font-size:11px;color:#fff;letter-spacing:-0.259px;">Data</span>
<svg style="left:1413.5px;top:56px" width="9" height="11"><path d="M2.2 0 L6.8 0 L6.8 5 L8.6 6.6 L8.6 7.4 L0.4 7.4 L0.4 6.6 L2.2 5 Z" fill="#c8c8c8"/><path d="M4.5 7.4 L4.5 10.6" stroke="#c8c8c8" stroke-width="1.2"/><path d="M0.4 8 L8.6 8" stroke="#2a2a2a" stroke-width="0.8"/></svg>
<svg style="left:1428.5px;top:58px" width="7" height="6"><path d="M0.5 0 L6.5 6 M6.5 0 L0.5 6" stroke="#c0c0c0" stroke-width="1.3"/></svg>
<span class="t" style="left:1197.3px;top:78.19px;font-size:11px;color:#fff;letter-spacing:-0.085px;">Name</span>
<span class="t" style="left:1203.3px;top:98.19px;font-size:11px;color:#fff;letter-spacing:-0.211px;">Type</span>
<div class="a" style="left:1230px;top:75px;width:148.5px;height:19.5px;background:#444;border:1px solid #3a3a3a;border-radius:4px;"></div>
<div class="a" style="left:1382px;top:76px;width:1px;height:35px;background:#474747;"></div>
<div class="a" style="left:1385px;top:75px;width:51px;height:22px;background:#555;border:1px solid #3c3c3c;"></div>
<div class="a" style="left:1386px;top:76px;width:24.5px;height:20px;background:#c8c8c8;"></div>
<div class="a" style="left:1410.5px;top:76px;width:1px;height:20px;background:#3c3c3c;"></div>
<svg style="left:1390px;top:78px" width="17" height="16" viewBox="0 0 17 16"><rect x="1" y="1" width="13.4" height="9.6" rx="1.4" fill="#5078c8" stroke="#222" stroke-width="1.3"/><path d="M8.2 4 V14.4" stroke="#111" stroke-width="1.4"/><path d="M6.6 6.4 L3.6 9.8 L6.6 13.2 M9.8 6.4 L12.8 9.8 L9.8 13.2" fill="none" stroke="#111" stroke-width="2.8"/><path d="M6.6 6.4 L3.6 9.8 L6.6 13.2 M9.8 6.4 L12.8 9.8 L9.8 13.2" fill="none" stroke="#fff" stroke-width="1.3"/></svg>
<svg style="left:1415px;top:79px" width="17" height="15" viewBox="0 0 17 15"><rect x="0.8" y="1" width="11.6" height="8" rx="1" fill="#777" stroke="#c0c0c0" stroke-width="1.2"/><path d="M11 0.6 L6.4 7.6 L9.4 7.6 L7 13.6 L14.4 5.4 L11 5.4 L13.4 0.6 Z" fill="#c8c8c8" stroke="#444" stroke-width="0.8"/></svg>
<div class="a" style="left:1166px;top:115.5px;width:270px;height:1px;background:#464646;"></div>
<div class="a" style="left:1166px;top:120px;width:270px;height:20px;background:#333;border-radius:4px;"></div>
<span class="t" style="left:1172px;top:124.19px;font-size:11px;color:#b4b4b4;letter-spacing:-0.526px;font-style:italic;">Search</span>
<svg style="left:1421.5px;top:124.5px" width="12" height="12"><circle cx="7.4" cy="4.4" r="3.4" fill="none" stroke="#8a8a8a" stroke-width="1.4"/><path d="M5 7 L0.8 11.2" stroke="#8a8a8a" stroke-width="1.6" stroke-linecap="round"/></svg>
<!-- taskbar -->
<div class="a" style="left:0px;top:859px;width:1440px;height:1px;background:#262626;"></div>
<div class="a" style="left:0px;top:860px;width:1440px;height:40px;background:#000;"></div>
<div class="a" style="left:0;top:862px;width:1440px;height:38px;overflow:hidden"><div class="a" style="left:-40px;top:0;width:1520px;height:38px;transform:skewX(-40deg);background:linear-gradient(90deg,rgba(255,255,255,0) 0px,rgba(255,255,255,0) 560px,rgba(255,255,255,0.07) 640px,rgba(255,255,255,0) 700px,rgba(255,255,255,0) 740px,rgba(255,255,255,0.08) 800px,rgba(255,255,255,0) 860px,rgba(255,255,255,0) 900px,rgba(255,255,255,0.07) 950px,rgba(255,255,255,0.02) 990px,rgba(255,255,255,0.06) 1020px,rgba(255,255,255,0) 1070px,rgba(255,255,255,0) 1180px,rgba(255,255,255,0.07) 1250px,rgba(255,255,255,0) 1310px,rgba(255,255,255,0) 1520px)"></div></div>
<div class="a" style="left:0px;top:861px;width:1440px;height:1px;background:#6a6a6a;"></div>
<div class="a" style="left:60px;top:861px;width:58px;height:38px;background:linear-gradient(125deg,#686868 0,#484848 22%,#1c1c1c 46%,#080808 60%,#0a0a0a 75%,#222 100%);border:1px solid #8e8e8e;border-radius:3px;box-shadow:inset 0 0 0 1px rgba(255,255,255,.08);"></div>
<div class="a" style="left:184px;top:861px;width:58px;height:38px;background:linear-gradient(125deg,#686868 0,#484848 22%,#1c1c1c 46%,#080808 60%,#0a0a0a 75%,#222 100%);border:1px solid #8e8e8e;border-radius:3px;box-shadow:inset 0 0 0 1px rgba(255,255,255,.08);"></div>
<div class="a" style="left:246px;top:861px;width:58px;height:38px;background:linear-gradient(125deg,#686868 0,#484848 22%,#1c1c1c 46%,#080808 60%,#0a0a0a 75%,#222 100%);border:1px solid #8e8e8e;border-radius:3px;box-shadow:inset 0 0 0 1px rgba(255,255,255,.08);"></div>
<div class="a" style="left:432px;top:861px;width:58px;height:38px;background:linear-gradient(125deg,#9c9c9c 0,#858585 30%,#5a5a5a 52%,#6a6a6a 70%,#8a8a8a 100%);border:1px solid #d0d0d0;border-radius:3px;box-shadow:inset 0 0 0 1px rgba(255,255,255,.18);"></div>
<div class="a" style="left:494px;top:861px;width:58px;height:38px;background:linear-gradient(125deg,#686868 0,#484848 22%,#1c1c1c 46%,#080808 60%,#0a0a0a 75%,#222 100%);border:1px solid #8e8e8e;border-radius:3px;box-shadow:inset 0 0 0 1px rgba(255,255,255,.08);"></div>
<svg style="left:7px;top:860px" width="41" height="40" viewBox="7 860 41 40"><defs><radialGradient id="orb" cx="0.5" cy="0.95" r="0.8"><stop offset="0" stop-color="#2ee0ff"/><stop offset="0.3" stop-color="#1a9ad8"/><stop offset="0.65" stop-color="#12559a"/><stop offset="1" stop-color="#0c3a70"/></radialGradient><linearGradient id="orbh" x1="0" y1="0" x2="0" y2="1"><stop offset="0" stop-color="#fff" stop-opacity="0.55"/><stop offset="1" stop-color="#fff" stop-opacity="0.12"/></linearGradient></defs>
<circle cx="27.2" cy="880" r="18.4" fill="url(#orb)" stroke="#7a8a9a" stroke-width="0.8"/>
<path d="M9.6 879 A17.6 17.6 0 0 1 44.8 879 Q27 872 9.6 879 Z" fill="url(#orbh)"/>
<path d="M19.6 869.6 Q24 867.6 28.8 869.6 L27.2 878.6 Q22.6 876.8 18 878.8 Z" fill="#ee5a24"/>
<path d="M29.8 872 Q34.4 873.6 39.2 871.4 L37.4 880.2 Q32.8 882.4 28.2 880.8 Z" fill="#8cc63a"/>
<path d="M17.6 880 Q22.2 878 26.8 879.8 L25.4 888 Q20.8 886 15.6 888.2 Z" fill="#3aa0ee"/>
<path d="M27.8 882 Q32.4 883.6 37 881.4 L35.4 889.4 Q30.8 891.6 26.2 890 Z" fill="#f8c82a"/>
</svg>
<svg style="left:70px;top:862px" width="40" height="36" viewBox="70 862 40 36"><defs><radialGradient id="ie" cx="0.5" cy="0.85" r="0.85"><stop offset="0" stop-color="#4adcff"/><stop offset="0.45" stop-color="#1a8ae8"/><stop offset="1" stop-color="#0a3aa0"/></radialGradient><linearGradient id="ier" x1="1" y1="0" x2="0" y2="1"><stop offset="0" stop-color="#f0a800"/><stop offset="0.6" stop-color="#f4b81a"/><stop offset="1" stop-color="#b8b86a"/></linearGradient></defs>
<circle cx="90.6" cy="880" r="12" fill="url(#ie)" stroke="#0a1a50" stroke-width="0.8"/>
<path d="M86.4 879.4 Q86.8 873.8 91.2 873.8 Q95.6 873.8 96 879.4 Z" fill="#0a0a14"/>
<path d="M86.4 882.6 H103 V884.6 H96 Q94.4 887 91.2 886.8 Q87 886.6 86.4 882.6 Z" fill="#0a0a14"/>
<path d="M103.6 872.6 Q106 866.4 100 866.6 Q90 867.4 80 877.6 Q71.4 887.4 74.6 891 Q78 893.4 87.6 890" fill="none" stroke="url(#ier)" stroke-width="2" stroke-linecap="round"/>
<path d="M99.6 866.8 Q89 868 79.4 878.4 Q73 886.4 74.6 890.6" fill="none" stroke="#c8c060" stroke-width="1.2" opacity="0.6" transform="translate(-1.2,0.4)"/>
</svg>
<svg style="left:134px;top:868px" width="34" height="22" viewBox="134 868 34 22"><defs><linearGradient id="vsr" x1="0" y1="1" x2="1" y2="0"><stop offset="0" stop-color="#d83a1a"/><stop offset="0.5" stop-color="#f0602a"/><stop offset="1" stop-color="#f89a3a"/></linearGradient></defs>
<path d="M144 873 L157.6 885.6 L164 879" fill="none" stroke="#fbb81a" stroke-width="5" stroke-linejoin="round"/>
<path d="M157.6 885.6 L164 879" fill="none" stroke="#c8c83a" stroke-width="5"/>
<path d="M164.4 879.4 L157.6 872.6 L154 876" fill="none" stroke="#5a9ad8" stroke-width="5" stroke-linejoin="round"/>
<path d="M137.4 879.4 L144 872.8" fill="none" stroke="#7ac043" stroke-width="5" stroke-linecap="round"/>
<path d="M137.4 878.8 L144 885.6" fill="none" stroke="#4a8fe0" stroke-width="5" stroke-linecap="round"/>
<path d="M144.4 885.6 L158 872.4" fill="none" stroke="url(#vsr)" stroke-width="5.6" stroke-linecap="round"/>
</svg>
<svg style="left:196px;top:866px" width="36" height="31" viewBox="196 866 36 31"><defs><linearGradient id="fo" x1="0" y1="0" x2="0" y2="1"><stop offset="0" stop-color="#fbf0b8"/><stop offset="1" stop-color="#ecd47a"/></linearGradient><linearGradient id="fb" x1="0" y1="0" x2="0" y2="1"><stop offset="0" stop-color="#bfe6fa"/><stop offset="1" stop-color="#4aa8e0"/></linearGradient></defs>
<path d="M198 869 Q198 867.4 199.6 867.4 L208 867.4 L209.6 869.4 L213 869.4 L214.4 871 L219 871 L220.4 873 L227 873 Q228.6 873 228.6 874.6 L228.6 894 L198 894 Z" fill="#e8cc7a" stroke="#c8a040" stroke-width="0.7"/>
<rect x="200" y="868" width="3.4" height="2" fill="#1ab02a"/><rect x="203.4" y="868" width="4" height="2" fill="#fff"/>
<rect x="209" y="870.2" width="3" height="2" fill="#e02a1a"/><rect x="212" y="870.2" width="3.6" height="2" fill="#fff"/>
<rect x="217" y="872" width="3" height="2" fill="#2a90e8"/><rect x="220" y="872" width="4" height="2" fill="#fff"/>
<path d="M197.4 875 L229.2 875 L228.6 895 L198 895 Z" fill="url(#fo)" stroke="#d0aa4a" stroke-width="0.7"/>
<path d="M201.6 885.6 Q201.6 883.4 203.8 883.4 L222.6 883.4 Q224.8 883.4 224.8 885.6 L224.8 896 L219.4 896 L219.4 890 Q219.4 888.6 218 888.6 L208.4 888.6 Q207 888.6 207 890 L207 896 L201.6 896 Z" fill="url(#fb)" stroke="#2a8ad0" stroke-width="0.8"/>
<path d="M204 879 L205 884 L210 885 L205 886 L204 891 L203 886 L198.6 885 L203 884 Z" fill="#fff" opacity="0.85"/>
</svg>
<svg style="left:258px;top:863px" width="34" height="33" viewBox="258 863 34 33"><defs><linearGradient id="sky" x1="0" y1="0" x2="0.15" y2="1"><stop offset="0" stop-color="#1a3aa8"/><stop offset="0.55" stop-color="#4a78d8"/><stop offset="0.75" stop-color="#c8dcf4"/><stop offset="0.8" stop-color="#10205a"/><stop offset="1" stop-color="#0a1440"/></linearGradient></defs>
<rect x="259.6" y="863.8" width="25" height="31" fill="#f2f2f2" stroke="#c8c8c8" stroke-width="0.6"/>
<rect x="261.6" y="866" width="21" height="23.6" fill="url(#sky)"/>
<path d="M266 871 Q270 868 274 870 Q277 868.6 279 871 Q275 873.6 270 872.4 Z" fill="#a8c4f0" opacity="0.7"/>
<path d="M289.4 873.6 L272.6 886.6" stroke="#c8182a" stroke-width="2.2" stroke-linecap="round"/>
<path d="M272.6 886.6 L269 889.4" stroke="#d8d8e0" stroke-width="2.6"/><path d="M269 889.4 L266.6 891.4" stroke="#3a5ab8" stroke-width="2.4" stroke-linecap="round"/>
</svg>
<svg style="left:320px;top:863px" width="34" height="32" viewBox="320 863 34 32">
<path d="M323 866 Q330 863.4 339 864.4 L339 891 Q330 890 323.6 892 Z" fill="#c8dcf4" stroke="#7aa0d8" stroke-width="0.8"/>
<path d="M331 868.6 L351.4 870.6 L350.4 893.6 L330 891 Z" fill="#fbfcfe" stroke="#b8c8e0" stroke-width="0.7"/>
<path d="M331.6 883 L348.6 884.8 M331.4 886 L348.4 887.8 M331.2 889 L348.2 890.8 M343 874 L349.4 874.8 M343 877 L349.2 877.8 M343 880 L349 880.8" stroke="#2a55b0" stroke-width="1.4"/>
<text x="331.4" y="881" font-family="Liberation Sans, sans-serif" font-weight="bold" font-style="italic" font-size="12" fill="#2a55b0" transform="rotate(5 331 881)">W</text>
</svg>
<svg style="left:381px;top:862px" width="36" height="34" viewBox="381 862 36 34"><defs><radialGradient id="au" cx="0.5" cy="0.55" r="0.5"><stop offset="0" stop-color="#fff06a"/><stop offset="0.55" stop-color="#f8a01a"/><stop offset="1" stop-color="#e8201a"/></radialGradient></defs>
<circle cx="399.3" cy="881.6" r="10.6" fill="url(#au)"/>
<path d="M391 886 L393 877 L395 886 L397 873.6 L399.3 887 L401.6 873 L403.6 886 L405.6 877 L407.6 886" fill="none" stroke="#e8301a" stroke-width="1.5"/>
<path d="M386.6 884 Q383.4 866 399.3 865 Q415.2 866 412 884" fill="none" stroke="#0a14a8" stroke-width="2.8"/>
<rect x="383.4" y="876" width="5.6" height="13" rx="2.8" fill="#1a24c8" stroke="#0a0a6a" stroke-width="0.6"/><rect x="409.6" y="876" width="5.6" height="13" rx="2.8" fill="#1a24c8" stroke="#0a0a6a" stroke-width="0.6"/>
<rect x="388.6" y="878" width="1.6" height="10" fill="#b89a4a"/><rect x="408.4" y="878" width="1.6" height="10" fill="#b89a4a"/>
</svg>
<svg style="left:445px;top:864px" width="30" height="30" viewBox="0 0 30 30"><defs><linearGradient id="bl" x1="0" y1="0" x2="1" y2="1"><stop offset="0" stop-color="#a8d8f4"/><stop offset="0.45" stop-color="#84c6ee"/><stop offset="1" stop-color="#e4f4fc"/></linearGradient></defs><rect x="0.5" y="0.5" width="28.6" height="29" fill="url(#bl)" stroke="#e0f0fa" stroke-width="0.9"/><text x="5" y="25" font-family="Liberation Sans, sans-serif" font-weight="bold" font-size="29" fill="#f2faff" fill-opacity="0.9">B</text><path d="M0.5 22 Q14 14 29 19 V29.5 H0.5 Z" fill="#3a9ade" opacity="0.5"/></svg>
<svg style="left:510px;top:864px" width="27" height="32" viewBox="510 864 27 32">
<path d="M510.6 865 L529.6 865 L535.8 871.2 L535.8 895.4 L510.6 895.4 Z" fill="#f4f4ec" stroke="#d0d0c8" stroke-width="0.6"/><path d="M529.6 865 L529.6 871.2 L535.8 871.2 Z" fill="#b8b8b0"/>
<rect x="515" y="873" width="17.2" height="15.4" fill="#fdfdf4" stroke="#555" stroke-width="0.7"/><rect x="515" y="873" width="17.2" height="2.6" fill="#1a2a9a"/>
<path d="M526 874.3 H527 M528 874.3 H529 M530 874.3 H531" stroke="#fff" stroke-width="0.8"/>
<circle cx="518.8" cy="881" r="1.7" fill="#d81a1a"/><path d="M521.6 879.4 L524.6 881 L521.6 882.6 Z" fill="#1a3ad8"/><path d="M527.6 879 L529.6 882.6 H525.6 Z" fill="#1a9a2a"/>
<path d="M517 885 H520.4 M521.6 885 H525 M526.2 885 H529.6" stroke="#666" stroke-width="0.9"/>
</svg>
<svg style="left:1263px;top:879px" width="7.4" height="4" viewBox="0 0 7.4 4"><path d="M0 4 L7.4 4 L3.7 0 Z" fill="#f4f4f4"/></svg>
<svg style="left:1283px;top:873px" width="17" height="17" viewBox="0 0 17 17"><path d="M1.6 1 V16" stroke="#eee" stroke-width="1.6"/><path d="M2.6 2 Q5 1 7.6 2 V8 Q5 7 2.6 8.2 Z" fill="#f8f8f8"/><path d="M7.6 4 Q10.4 5.6 13.6 4.4 V9.6 Q10.4 10.8 7.6 9.4 Z" fill="#e0e0e0"/><circle cx="11.4" cy="11.6" r="4.6" fill="#e0202a" stroke="#fff" stroke-width="0.5"/><path d="M9.4 9.6 L13.4 13.6 M13.4 9.6 L9.4 13.6" stroke="#fff" stroke-width="1.5"/></svg>
<svg style="left:1307px;top:873px" width="18" height="17" viewBox="0 0 18 17"><rect x="6.4" y="3" width="8.6" height="11" fill="#1a1a1a" stroke="#e8e8e8" stroke-width="1.3"/><path d="M1.4 1 V4.6 Q1.4 6.4 3.2 6.4 Q5 6.4 5 4.6 V1" fill="none" stroke="#f4f4f4" stroke-width="1.1"/><path d="M3.2 0.4 V14 H6.4" fill="none" stroke="#f4f4f4" stroke-width="1.2"/><path d="M11.6 6.8 L16.8 15.8 H6.4 Z" fill="#f8d820" stroke="#b89a0a" stroke-width="0.5"/><path d="M11.6 9.8 V13 M11.6 13.8 V14.9" stroke="#222" stroke-width="1.3"/></svg>
<svg style="left:1331px;top:873px" width="18" height="17" viewBox="0 0 18 17"><path d="M1 5.4 H3.2 L8 0.6 V15.4 L3.2 10.6 H1 Z" fill="#f2f2f2"/><circle cx="12" cy="11.6" r="4.6" fill="#e0202a" stroke="#f8c8c8" stroke-width="0.5"/><path d="M10 9.6 L14 13.6 M14 9.6 L10 13.6" stroke="#fff" stroke-width="1.5"/></svg>
<span class="t" style="left:1367.5px;top:866.44px;font-size:12px;color:#fff;letter-spacing:-0.147px;">8:51 AM</span>
<span class="t" style="left:1360.5px;top:883.44px;font-size:12px;color:#fff;letter-spacing:-0.117px;">11/30/2009</span>
<div class="a" style="left:1426px;top:861px;width:14px;height:38px;background:linear-gradient(100deg,#6a6a6a 0,#3a3a3a 45%,#222 100%);border:1px solid #8a8a8a;border-right:none;border-radius:2px 0 0 2px;"></div>
</body></html>
